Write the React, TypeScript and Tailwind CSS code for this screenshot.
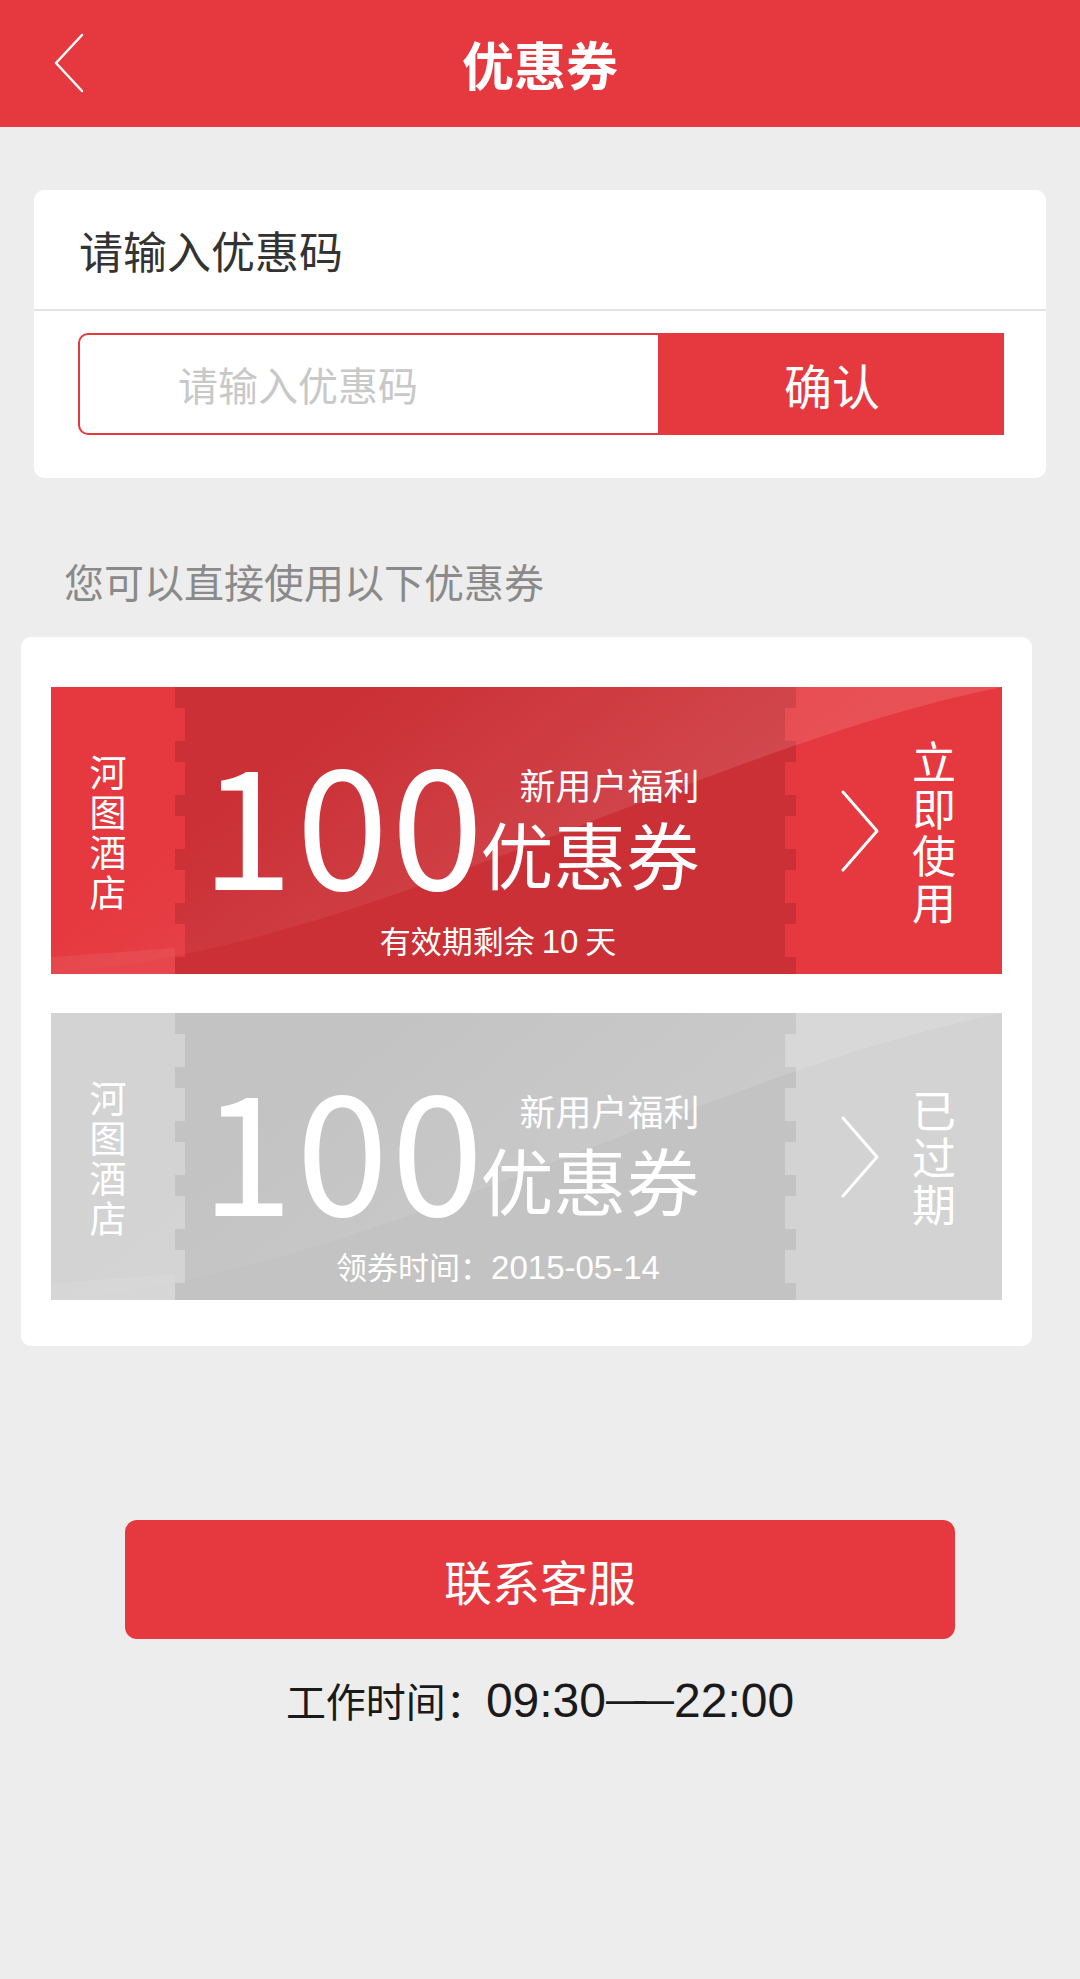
import React from 'react';

type CouponVariant = 'active' | 'expired';

const palette = {
    active: {
        side: 'bg-[#e5393f]',
        middle: 'bg-[#cb3036]',
        teeth: 'bg-[image:repeating-linear-gradient(to_bottom,#cb3036_0px,#cb3036_21px,#e5393f_21px,#e5393f_54px)]',
    },
    expired: {
        side: 'bg-[#d3d3d3]',
        middle: 'bg-[#c3c3c3]',
        teeth: 'bg-[image:repeating-linear-gradient(to_bottom,#c3c3c3_0px,#c3c3c3_21px,#d3d3d3_21px,#d3d3d3_54px)]',
    },
};

const Chevron: React.FC<{ className?: string; dir: 'left' | 'right' }> = ({ className, dir }) => (
    <svg className={className} viewBox="0 0 40 84" fill="none" stroke="currentColor" strokeWidth={3} strokeLinecap="round" strokeLinejoin="round">
        {dir === 'right' ? <polyline points="3,3 37,42 3,81" /> : <polyline points="37,3 3,42 37,81" />}
    </svg>
);

const Coupon: React.FC<{ variant: CouponVariant; footer: React.ReactNode; action: string }> = ({ variant, footer, action }) => {
    const c = palette[variant];
    return (
        <div className="relative flex h-[287px] w-[951px] text-white">
            {/* stub */}
            <div className={`flex w-[124px] items-center justify-center pr-[10px] ${c.side}`}>
                <div className="w-[38px] break-all text-center text-[37px] leading-[40px]">河图酒店</div>
            </div>

            {/* body with perforated edges */}
            <div className="flex w-[621px]">
                <div className={`w-[10px] ${c.teeth}`} />
                <div className={`flex w-[600px] flex-col ${c.middle}`}>
                    <div className="ml-[16px] mt-[61px] flex items-end">
                        <div className="text-[166px] leading-[140px] tracking-[3px]">100</div>
                        <div className="-mb-[4px] -ml-[6px] flex flex-col items-end">
                            <div className="mb-[6px] text-[36px] leading-[44px]">新用户福利</div>
                            <div className="text-[73px] leading-[80px]">优惠券</div>
                        </div>
                    </div>
                    <div className="mb-[15px] mt-auto pl-[26px] text-center text-[31px] leading-[34px]">{footer}</div>
                </div>
                <div className={`w-[11px] ${c.teeth}`} />
            </div>

            {/* action */}
            <div className={`flex flex-1 items-center pl-[44px] ${c.side}`}>
                <Chevron dir="right" className="h-[84px] w-[40px] text-white" />
                <div className="ml-[32px] w-[44px] break-all text-center text-[44px] leading-[47px]">{action}</div>
            </div>

            {/* gloss */}
            <svg className="pointer-events-none absolute inset-0 h-full w-full" viewBox="0 0 951 287" preserveAspectRatio="none">
                <defs>
                    <linearGradient id={`gloss-${variant}`} gradientUnits="userSpaceOnUse" x1="620" y1="170" x2="420" y2="-80">
                        <stop offset="0" stopColor="#fff" stopOpacity="0.12" />
                        <stop offset="1" stopColor="#fff" stopOpacity="0" />
                    </linearGradient>
                </defs>
                <path d="M0,285 C300,270 650,60 951,0 L0,0 Z" fill={`url(#gloss-${variant})`} />
                <path d="M0,270 Q60,266 124,261 L124,287 L0,287 Z" fill="#fff" fillOpacity="0.07" />
            </svg>
        </div>
    );
};

const latin = "font-['Liberation_Sans','Noto_Sans_CJK_SC',sans-serif]";

const App: React.FC = () => {
    return (
        <div className="min-h-[1979px] bg-[#ededed] font-['Noto_Sans_CJK_SC',sans-serif]">
            <div className="relative flex h-[127px] items-center justify-center bg-[#e5393f]">
                <button className="absolute left-[54px] top-[33px] text-white">
                    <svg className="h-[60px] w-[30px]" viewBox="0 0 30 60" fill="none" stroke="currentColor" strokeWidth={2.5} strokeLinecap="round" strokeLinejoin="round">
                        <polyline points="28,2 2,30 28,58" />
                    </svg>
                </button>
                <h1 className="text-[52px] font-bold text-white">优惠券</h1>
            </div>

            <div className="mx-[34px] mt-[63px] rounded-[10px] bg-white">
                <div className="flex h-[119px] items-center pl-[45px] text-[44px] text-[#333]">请输入优惠码</div>
                <div className="h-[2px] bg-[#e3e3e3]" />
                <div className="flex pb-[43px] pl-[44px] pr-[42px] pt-[22px]">
                    <input
                        type="text"
                        placeholder="请输入优惠码"
                        className="h-[102px] w-[582px] rounded-l-[10px] border-2 border-[#e5393f] pl-[98px] text-[40px] text-[#333] outline-none placeholder:text-[#c8c8c8]"
                    />
                    <button className="flex-1 bg-[#e5393f] text-[48px] text-white">确认</button>
                </div>
            </div>

            <p className="mt-[79px] pl-[64px] text-[40px] leading-[48px] text-[#8a8a8a]">您可以直接使用以下优惠券</p>

            <div className="ml-[21px] mt-[32px] flex w-[1011px] flex-col gap-[39px] rounded-[10px] bg-white px-[30px] pb-[46px] pt-[50px]">
                <Coupon
                    variant="active"
                    footer={<>有效期剩余 <span className={`${latin} text-[33px]`}>10</span> 天</>}
                    action="立即使用"
                />
                <Coupon
                    variant="expired"
                    footer={<>领券时间：<span className={`${latin} text-[33px]`}>2015-05-14</span></>}
                    action="已过期"
                />
            </div>

            <button className="mx-auto mt-[174px] flex h-[119px] w-[830px] items-center justify-center rounded-[12px] bg-[#e5393f] text-[48px] text-white">
                联系客服
            </button>
            <p className="mt-[34px] text-center text-[40px] leading-[54px] text-[#1a1a1a]">
                工作时间：
                <span className={`${latin} text-[48px]`}>09:30</span>
                <span className={`${latin} inline-block -translate-y-[4px] text-[40px]`}>
                    <span className="tracking-[-12px]">—</span>—
                </span>
                <span className={`${latin} text-[48px]`}>22:00</span>
            </p>
        </div>
    );
};

export default App;
